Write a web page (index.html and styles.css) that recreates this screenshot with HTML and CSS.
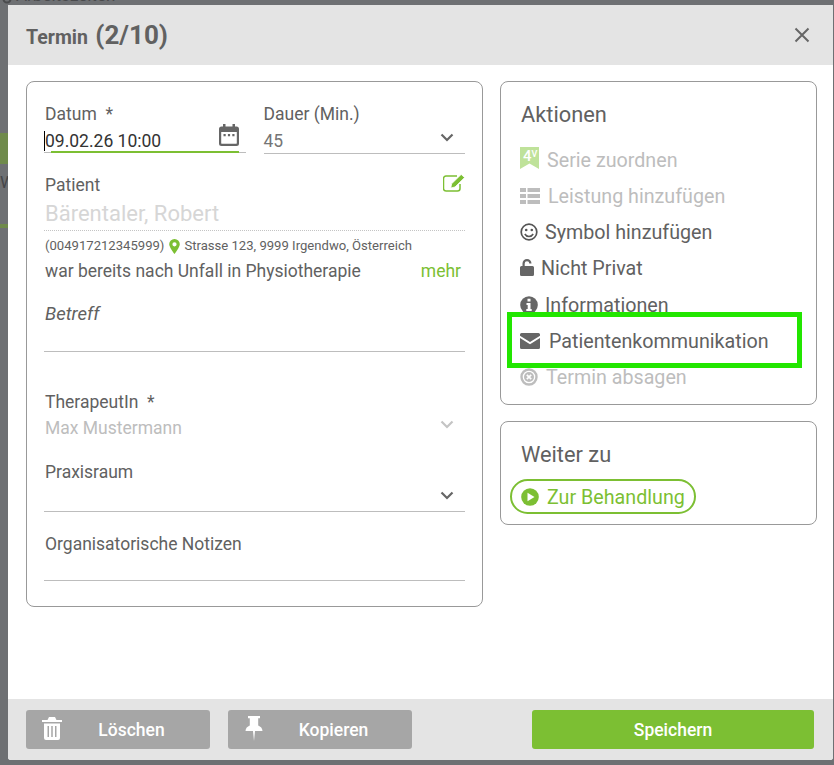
FILE: index.html
```html
<!DOCTYPE html>
<html lang="de">
<head>
<meta charset="utf-8">
<title>Termin</title>
<link rel="stylesheet" href="styles.css">
</head>
<body>
<div class="backdrop">
  <svg class="bg-gear" viewBox="0 0 10 10" width="10" height="10"><circle cx="5" cy="5" r="3.500" fill="none" stroke="#4a4b4d" stroke-width="2"/></svg>
  <div class="bg-title">Arbeitszeiten</div>
  <div class="bg-green"></div>
  <div class="bg-letter">W</div>
  <div class="bg-line"></div>
</div>
<main class="modal">
  <header class="modal-head">
    <h1><span class="t-main">Termin</span> <span class="t-count">(2/10)</span></h1>
    <svg class="close" viewBox="0 0 16 16" width="16" height="16"><path d="M1.500 1.500l13 13M14.500 1.500l-13 13" stroke="#666" stroke-width="2" fill="none"/></svg>
  </header>
  <div class="modal-body">
    <section class="card form">
      <div class="row-two">
        <div class="field date">
          <div class="label">Datum&nbsp; *</div>
          <div class="value dark"><span class="caret"></span>09.02.26 10:00</div>
          <svg class="cal" viewBox="0 0 20 22" width="20" height="22"><path fill="#666" d="M4 0h2.500v2.500h7V0H16v2.500h1.500A2.500 2.500 0 0 1 20 5v14.500a2.500 2.500 0 0 1-2.500 2.500h-15A2.500 2.500 0 0 1 0 19.500V5a2.500 2.500 0 0 1 2.500-2.500H4zM2.200 8v11.300c0 .3.200.500.500.500h14.600c.3 0 .500-.2.500-.500V8z"/><path fill="#666" d="M4.500 10h2.200v2.200H4.500zM8.900 10h2.200v2.200H8.900zM13.300 10h2.200v2.200h-2.200z"/></svg>
          <span class="focus-line"></span>
        </div>
        <div class="field dur">
          <div class="label">Dauer (Min.)</div>
          <div class="value">45</div>
          <svg class="chev" viewBox="0 0 14 9" width="14" height="9"><path d="M1.500 1.500L7 7l5.500-5.500" stroke="#666" stroke-width="2.200" fill="none"/></svg>
        </div>
      </div>
      <div class="patient">
        <div class="label">Patient</div>
        <svg class="edit" viewBox="0 0 22 18" width="22" height="18"><path fill="none" stroke="#7cbf33" stroke-width="1.500" d="M17 10v4.500A2.500 2.500 0 0 1 14.500 17H3a2.500 2.500 0 0 1-2.500-2.500v-10A2.500 2.500 0 0 1 3 2h11"/><path fill="#7cbf33" stroke="#fff" stroke-width=".8" d="M18.200 .4l3.400 3.200L12 13l-4.200 1 .8-4.200z"/></svg>
        <div class="patient-name">Bärentaler, Robert</div>
        <div class="contact">(004917212345999)
          <svg class="pin" viewBox="0 0 11 15" width="11" height="15"><path fill="#7cbf33" fill-rule="evenodd" d="M5.500 0A5.300 5.300 0 0 0 .2 5.300C.2 8.500 5.500 15 5.500 15s5.300-6.500 5.300-9.700A5.300 5.300 0 0 0 5.500 0zm0 3.200a2.100 2.100 0 1 1 0 4.200 2.100 2.100 0 0 1 0-4.200z"/></svg>
          Strasse 123, 9999 Irgendwo, Österreich</div>
        <div class="note"><span>war bereits nach Unfall in Physiotherapie</span><span class="more">mehr</span></div>
      </div>
      <div class="field betreff">
        <div class="label italic">Betreff</div>
      </div>
      <div class="therapist">
        <div class="label">TherapeutIn&nbsp; *</div>
        <div class="value muted">Max Mustermann</div>
        <svg class="chev" viewBox="0 0 14 9" width="14" height="9"><path d="M1.500 1.500L7 7l5.500-5.500" stroke="#c4c4c4" stroke-width="2.200" fill="none"/></svg>
      </div>
      <div class="field room">
        <div class="label">Praxisraum</div>
        <svg class="chev" viewBox="0 0 14 9" width="14" height="9"><path d="M1.500 1.500L7 7l5.500-5.500" stroke="#666" stroke-width="2.200" fill="none"/></svg>
      </div>
      <div class="field notes">
        <div class="label">Organisatorische Notizen</div>
      </div>
    </section>
    <aside class="side">
      <section class="card actions">
        <h2>Aktionen</h2>
        <ul>
          <li class="off">
            <span class="series"><svg viewBox="0 0 19 22" width="19" height="22"><path fill="#bfe29a" d="M0 0h19v22l-9.500-5.500L0 22z"/></svg><span class="badge-4">4<sup>V</sup></span></span>
            <span>Serie zuordnen</span></li>
          <li class="off">
            <svg viewBox="0 0 20 16" width="20" height="16"><path fill="#bdbdbd" d="M0 0h6v4H0zM7.500 0H20v4H7.500zM0 6h6v4H0zM7.500 6H20v4H7.500zM0 12h6v4H0zM7.500 12H20v4H7.500z"/></svg>
            <span>Leistung hinzufügen</span></li>
          <li class="tight">
            <svg viewBox="0 0 18 18" width="18" height="18"><circle cx="9" cy="9" r="7.800" fill="none" stroke="#555" stroke-width="1.700"/><circle cx="6.200" cy="7" r="1.300" fill="#555"/><circle cx="11.800" cy="7" r="1.300" fill="#555"/><path d="M4.800 11c1 1.700 2.500 2.500 4.200 2.500s3.200-.8 4.200-2.500" fill="none" stroke="#555" stroke-width="1.500"/></svg>
            <span>Symbol hinzufügen</span></li>
          <li class="tight">
            <svg class="lock" viewBox="0 0 14 17" width="14" height="17"><path fill="#666" d="M2.500 7V4.500a4.500 4.500 0 0 1 9 0h-2.200a2.300 2.300 0 0 0-4.600 0V7H12.500A1.500 1.500 0 0 1 14 8.500v7a1.500 1.500 0 0 1-1.500 1.500h-11A1.500 1.500 0 0 1 0 15.500v-7A1.500 1.500 0 0 1 1.500 7z"/></svg>
            <span>Nicht Privat</span></li>
          <li class="tight info">
            <svg viewBox="0 0 18 18" width="18" height="18"><circle cx="9" cy="9" r="8.800" fill="#666"/><path fill="#fff" d="M7.500 2.800h3v2.600h-3zM6.500 7h4v6h1.200v2H6.300v-2h1.400V9H6.500z"/></svg>
            <span>Informationen</span></li>
          <li class="wide">
            <svg viewBox="0 0 20 16" width="20" height="16"><path fill="#666" d="M1.500 0h17A1.500 1.500 0 0 1 20 1.500v1.300l-10 6.300L0 2.800V1.500A1.500 1.500 0 0 1 1.500 0zM0 5l10 6.300L20 5v9.500a1.500 1.500 0 0 1-1.500 1.500h-17A1.500 1.500 0 0 1 0 14.500z"/></svg>
            <span>Patientenkommunikation</span></li>
          <li class="off">
            <svg viewBox="0 0 18 18" width="18" height="18"><circle cx="9" cy="9" r="7.500" fill="none" stroke="#bdbdbd" stroke-width="2.400"/><circle cx="9" cy="9" r="5" fill="#bdbdbd"/><path d="M6.800 6.800l4.400 4.400M11.200 6.800l-4.400 4.400" stroke="#fff" stroke-width="1.700"/></svg>
            <span>Termin absagen</span></li>
        </ul>
        <div class="highlight"></div>
      </section>
      <section class="card next">
        <h2>Weiter zu</h2>
        <a class="pill">
          <svg viewBox="0 0 18 18" width="18" height="18"><circle cx="9" cy="9" r="8.800" fill="#7cbf33"/><path fill="#fff" d="M6.500 4.700l7 4.300-7 4.300z"/></svg>
          <span>Zur Behandlung</span></a>
      </section>
    </aside>
  </div>
  <footer class="modal-foot">
    <button class="btn grey">
      <svg class="btn-ico" viewBox="0 0 20 23" width="20" height="23"><path fill="#fff" fill-rule="evenodd" d="M7 0h6l1.500 3H20v2H0V3h5.500zM2 6.500h16V21a2 2 0 0 1-2 2H4a2 2 0 0 1-2-2zM5.500 9v11h1.500V9zM9.250 9v11h1.500V9zM13 9v11h1.500V9z"/></svg>
      <span>Löschen</span></button>
    <button class="btn grey">
      <svg class="btn-ico pin-ico" viewBox="0 0 18 25" width="18" height="25"><path fill="#fff" d="M3 0h12v2.200h-1.800v7.300c2.400 1 4.300 2.800 4.300 5.500H10l-1 10-1-10H.5c0-2.700 1.900-4.500 4.300-5.500V2.200H3z"/></svg>
      <span>Kopieren</span></button>
    <button class="btn green">Speichern</button>
  </footer>
</main>
</body>
</html>
```
FILE: styles.css
```css
* { box-sizing: border-box; }
html, body { margin: 0; height: 100%; }
body {
  width: 834px;
  height: 765px;
  overflow: hidden;
  position: relative;
  background: #6e7073;
  font-family: Roboto, "Liberation Sans", sans-serif;
  color: #616161;
  font-size: 17px;
}
.backdrop { position: absolute; inset: 0; overflow: hidden; }
.bg-gear { position: absolute; left: 2px; top: -6px; }
.bg-title { position: absolute; left: 16px; top: -15px; font-size: 17px; color: #4a4b4d; }
.bg-green { position: absolute; left: 0; top: 133px; width: 8px; height: 31px; background: #6f8a4b; }
.bg-letter { position: absolute; left: 0; top: 172px; font-size: 17px; color: #45464a; }
.bg-line { position: absolute; left: 0; top: 224px; width: 8px; height: 4px; background: #6f8a4b; }

.modal {
  position: absolute;
  left: 8px;
  top: 5px;
  width: 825px;
  height: 755px;
  background: #fff;
  display: flex;
  flex-direction: column;
  border-radius: 3px;
}
.modal-head {
  height: 60px;
  flex: none;
  background: #e4e4e4;
  display: flex;
  align-items: center;
  justify-content: space-between;
  padding: 0 23px 0 18px;
}
h1 { margin: 0 0 6px; font-weight: 700; color: #616161; line-height: 1; word-spacing: -1px; }
.t-main { font-size: 19.500px; }
.t-count { font-size: 26px; font-weight: 700; }

.modal-body {
  flex: 1;
  padding: 16px 16px 0 18px;
  display: flex;
  align-items: flex-start;
  gap: 17px;
}
.card { border: 1px solid #999; border-radius: 8px; background: #fff; }
.form { width: 457px; height: 526px; padding: 22px 17px 0 17px; }
.label { font-size: 17.500px; line-height: 20px; color: #616161; padding-left: 1px; }
.italic { font-style: italic; font-size: 18.500px; padding-top: 1px; }
.value { font-size: 17.500px; line-height: 22px; margin-top: 6px; color: #757575; padding-left: 1px; }
.value.dark { color: #333; position: relative; }
.value.muted { color: #bdbdbd; margin-top: 5px; }
.dur .label, .dur .value { padding-left: 0; }
.caret { position: absolute; left: 0; top: 1px; width: 1px; height: 20px; background: #000; }
.row-two { display: flex; gap: 17px; }
.field { position: relative; border-bottom: 1px solid #bdbdbd; }
.date { width: 202px; height: 49px; }
.dur { width: 202px; height: 50px; margin-left: 1px; }
.cal { position: absolute; right: 7px; top: 20px; }
.focus-line { position: absolute; left: 7px; right: 7px; bottom: -1px; height: 2px; background: #7cbf33; }
.chev { position: absolute; right: 11px; top: 29px; }
.patient { position: relative; margin-top: 21px; }
.edit { position: absolute; right: 0; top: -1px; }
.patient-name {
  font-size: 22px;
  line-height: 26px;
  color: #d6d6d6;
  margin-top: 6px;
  padding: 0 0 3px 1px;
  border-bottom: 1px dotted #c4c4c4;
}
.contact { display: flex; align-items: center; gap: 4px; font-size: 13.100px; line-height: 20px; margin-top: 5px; color: #616161; padding-left: 1px; }
.pin { margin-left: 1px; }
.note { display: flex; justify-content: space-between; font-size: 17.500px; line-height: 22px; margin-top: 4px; padding: 0 4px 0 1px; }
.more { color: #7cbf33; }
.betreff { height: 49px; margin-top: 21px; }
.therapist { position: relative; margin-top: 40px; height: 61px; }
.therapist .chev { top: 28px; }
.room { height: 50px; margin-top: 9px; }
.room .chev { top: 29px; }
.notes { height: 47px; margin-top: 22px; }

.side { width: 317px; display: flex; flex-direction: column; gap: 16px; }
h2 { margin: 0; padding-top: 1px; font-size: 21.800px; font-weight: 400; line-height: 28px; color: #616161; }
.actions { position: relative; height: 324px; padding: 18px 0 0 20px; }
ul { list-style: none; margin: 13px 0 0 -1px; padding: 0; }
li { position: relative; height: 36.200px; display: flex; align-items: center; gap: 8px; font-size: 19.700px; color: #616161; }
li.off { color: #bdbdbd; }
li.tight { gap: 7px; }
li.wide { gap: 9px; }
li.info span { padding-top: 1px; }
.lock { margin-top: -3px; }
.series { position: relative; display: block; width: 19px; height: 22px; margin-top: -4px; }
.series svg { display: block; }
.badge-4 { position: absolute; left: 3px; top: 1px; font-size: 15px; line-height: 16px; color: #fff; font-weight: 500; }
.badge-4 sup { font-size: 9px; line-height: 0; vertical-align: 4px; }
.highlight { position: absolute; left: 6px; top: 230px; width: 295px; height: 56px; border: 5px solid #22e600; }
.next { height: 104px; padding: 18px 0 0 20px; }
.pill {
  display: inline-flex;
  align-items: center;
  gap: 8px;
  height: 35px;
  margin: 10px 0 0 -11px;
  padding: 1px 9px 0;
  border: 2px solid #7cbf33;
  border-radius: 18px;
  font-size: 19.700px;
  color: #7cbf33;
}

.modal-foot {
  height: 61px;
  flex: none;
  background: #e4e4e4;
  padding: 11px 19px 0 18px;
  display: flex;
  gap: 18px;
  border-radius: 0 0 3px 3px;
}
.btn {
  position: relative;
  height: 39px;
  width: 184px;
  border: 0;
  border-radius: 3px;
  font-family: Roboto, "Liberation Sans", sans-serif;
  font-size: 17.500px;
  font-weight: 500;
  color: #fff;
  padding: 0 0 0 27px;
}
.grey { background: #a6a6a6; }
.green { background: #7cbf33; width: 282px; margin-left: auto; padding: 0; }
.btn-ico { position: absolute; left: 16px; top: 7px; }
.pin-ico { left: 17px; top: 6px; }
```
